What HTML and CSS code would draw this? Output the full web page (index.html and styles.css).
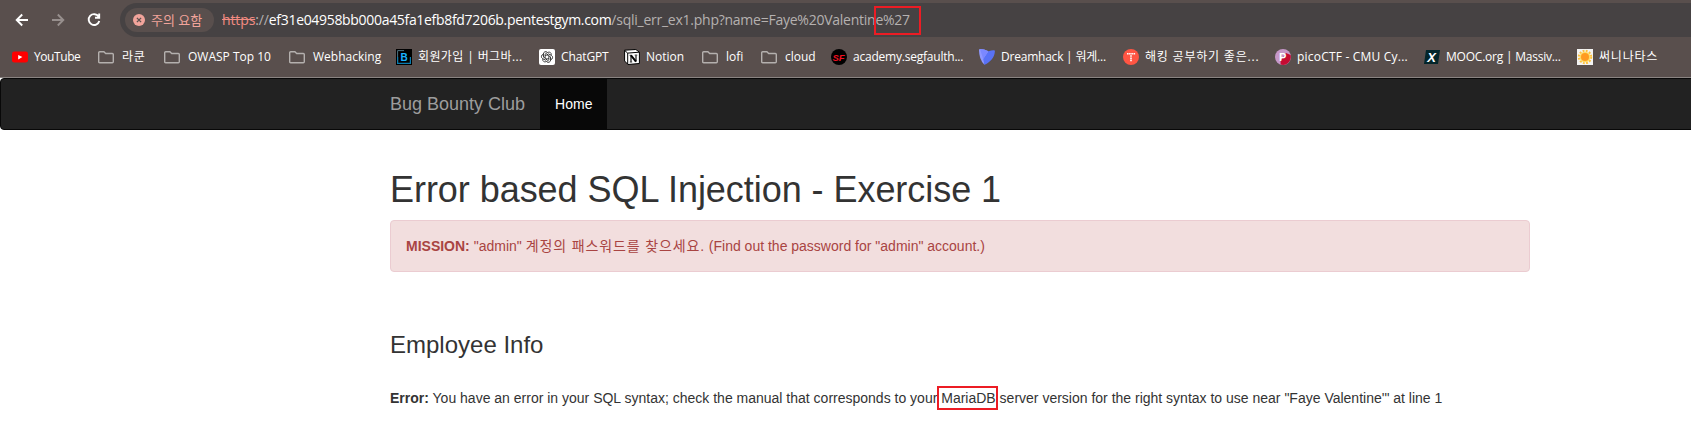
FILE: index.html
```html
<!DOCTYPE html>
<html lang="ko">
<head>
<meta charset="utf-8">
<title>Bug Bounty Club</title>
<link rel="stylesheet" href="styles.css">
</head>
<body>
<div class="browser">
  <div class="toolbar">
    <svg class="nav-icon" viewBox="0 0 16 16"><path d="M14 8H3M8.2 2.5L2.7 8l5.5 5.5"/></svg>
    <svg class="nav-icon dim" viewBox="0 0 16 16"><path d="M2 8h11M7.8 2.5L13.3 8l-5.5 5.5"/></svg>
    <svg class="nav-icon" viewBox="0 0 16 16"><path d="M12.6 4.6A5.4 5.4 0 1 0 13.3 9M13.2 1.6v4.2H9"/></svg>
    <div class="address">
      <div class="chip">
        <svg class="chip-icon" viewBox="0 0 12 12"><circle cx="6" cy="6" r="6" fill="#f2a49b"/><path d="M3.9 3.9l4.2 4.2M8.1 3.9L3.9 8.1" stroke="#594f4d" stroke-width="1.3"/></svg>
        <span>주의 요함</span>
      </div>
      <div class="url"><span class="scheme"><s>https</s><span class="slashes">://</span></span><span class="host">ef31e04958bb000a45fa1efb8fd7206b.pentestgym.com</span><span class="path">/sqli_err_ex1.php?name=Faye%20Valentin<span class="marked">e%27<span class="mark"></span></span></span></div>
    </div>
  </div>
  <div class="bookmarks">
    <div class="bm tight-3"><svg viewBox="0 0 16 16"><rect y="2.6" width="16" height="11" rx="2.4" fill="#f00"/><path d="M6.2 5.9v4.5L10.4 8.1z" fill="#fff"/></svg><span>YouTube</span></div>
    <div class="bm folder wide-3"><svg viewBox="0 0 16 16"><use href="#folder"/></svg><span>라쿤</span></div>
    <div class="bm folder"><svg viewBox="0 0 16 16"><use href="#folder"/></svg><span>OWASP Top 10</span></div>
    <div class="bm folder"><svg viewBox="0 0 16 16"><use href="#folder"/></svg><span>Webhacking</span></div>
    <div class="bm wide-2"><svg viewBox="0 0 16 16"><rect width="16" height="16" fill="#000"/><path d="M1.6 14.5V1.6H8" fill="none" stroke="#4d7382"/><path d="M1.6 8v6.4h12.8V8" fill="none" stroke="#087caf" stroke-width="1.2"/><text x="4.4" y="12" class="glyph-b">B</text></svg><span>회원가입 | 버그바...</span></div>
    <div class="bm tight-1"><svg viewBox="0 0 16 16"><rect width="16" height="16" rx="2" fill="#fff"/><g fill="none" stroke="#222" stroke-width=".8"><path id="petal" d="M6.1 9.1V5.1L8.8 3.4a2.3 2.3 0 0 1 3.4 2.6"/><use href="#petal" transform="rotate(60 8 8)"/><use href="#petal" transform="rotate(120 8 8)"/><use href="#petal" transform="rotate(180 8 8)"/><use href="#petal" transform="rotate(240 8 8)"/><use href="#petal" transform="rotate(300 8 8)"/></g></svg><span>ChatGPT</span></div>
    <div class="bm"><svg viewBox="0 0 16 16"><path d="M.6 1.2L11.8.5l3.6 2.6v11.4l-11.4 1L.6 12z" fill="#fff" stroke="#000"/><path d="M.8 1.6L3.7 4.1l11.6-.9M3.7 4.1v11.2" fill="none" stroke="#000"/><path d="M7 6.6v6.2M12 6.4v6.2" fill="none" stroke="#000" stroke-width="1.1"/><path d="M7 6.4l5 6.2" stroke="#000" stroke-width="2"/><path d="M5.6 6.3h2M5.8 13h2.4M10.7 6.1h2.6" stroke="#000" stroke-width=".8"/></svg><span>Notion</span></div>
    <div class="bm folder"><svg viewBox="0 0 16 16"><use href="#folder"/></svg><span>lofi</span></div>
    <div class="bm folder"><svg viewBox="0 0 16 16"><use href="#folder"/></svg><span>cloud</span></div>
    <div class="bm tight-2"><svg viewBox="0 0 16 16"><circle cx="8" cy="8" r="8" fill="#000"/><text x="1.5" y="11.6" class="glyph-sf">SF</text></svg><span>academy.segfaulth...</span></div>
    <div class="bm tight-2"><svg viewBox="0 0 16 16"><path d="M0 1Q0 0 1 0Q5 0 9.4 2.2L5.4 15.8Q0 10.5 0 1z" fill="#8f98ff"/><path d="M9.4 2.2Q13 1 15 1.2 16 1.3 15.9 2.2C15.6 9 10.5 13.5 5.4 15.8L4.2 10z" fill="#5972f5"/><path d="M1 0Q5 0 9.4 2.2L4.2 10z" fill="#7b88ff"/></svg><span>Dreamhack | 워게...</span></div>
    <div class="bm wide-3"><svg viewBox="0 0 16 16"><circle cx="8" cy="8" r="8" fill="#ff5543"/><g fill="#fff"><path d="M4 4h1.6v1.6H4zM6.1 4h1.6v1.6H6.1zM8.3 4h1.6v1.6H8.3zM10.5 4h1.6v1.6h-1.6zM7.2 6.2h1.6v1.6H7.2zM7.2 8.4h1.6V10H7.2zM7.2 10.6h1.6v1.6H7.2z"/></g></svg><span>해킹 공부하기 좋은...</span></div>
    <div class="bm wide-1"><svg viewBox="0 0 16 16"><circle cx="8" cy="8" r="8" fill="#c697c8"/><path d="M5.6 15.6A8 8 0 0 0 15.6 6L11 4 5.5 12z" fill="#c50b32"/><text x="4" y="12" class="glyph-p">P</text></svg><span>picoCTF - CMU Cy...</span></div>
    <div class="bm tight-2"><svg viewBox="0 0 16 16"><path d="M2 1h14l-2 14H0z" fill="#03262b"/><text x="3.2" y="12.8" class="glyph-x">X</text></svg><span>MOOC.org | Massiv...</span></div>
    <div class="bm wide-3"><svg viewBox="0 0 16 16"><rect width="16" height="16" fill="#f3f3f3"/><circle cx="8" cy="8" r="6.2" fill="none" stroke="#ffc23c" stroke-width="2" stroke-dasharray="1.9 1.35"/><circle cx="8" cy="8" r="5.3" fill="#ffdc61"/><circle cx="8" cy="8" r="4" fill="#ff9b22"/></svg><span>써니나타스</span></div>
  </div>
</div>
<svg class="defs"><defs><path id="folder" d="M1.7 2.7h4.2l1.8 1.8h6.6q1 0 1 1v7.2q0 1-1 1H1.7q-1 0-1-1v-9q0-1 1-1z" fill="none" stroke="#b4b0ae" stroke-width="1.4"/></defs></svg>
<div class="viewport">
  <div class="page">
    <nav class="navbar">
      <div class="container nav-inner">
        <a class="brand">Bug Bounty Club</a>
        <a class="home">Home</a>
      </div>
    </nav>
    <main class="container">
      <h1>Error based SQL Injection - Exercise 1</h1>
      <div class="alert"><strong>MISSION:</strong> "admin" <span class="ko">계정의 패스워드를 찾으세요.</span> (Find out the password for "admin" account.)</div>
      <h3>Employee Info</h3>
      <p class="error"><strong>Error:</strong> You have an error in your SQL syntax; check the manual that corresponds to your <span class="marked db">MariaDB<span class="mark"></span></span> server version for the right syntax to use near "Faye Valentine'" at line 1</p>
    </main>
  </div>
</div>
</body>
</html>
```
FILE: styles.css
```css
* { box-sizing: border-box; }
body { margin: 0; background: #fff; color: #333; font: 14px/20px "Liberation Sans", "Noto Sans CJK KR", sans-serif; }
.defs { display: none; }
.browser { height: 78px; background: #594f4d; border-bottom: 1px solid #8a8482; font-family: "Open Sans", "Noto Sans CJK KR", sans-serif; }
.toolbar { display: flex; align-items: center; height: 40px; padding-left: 14px; }
.nav-icon { width: 16px; height: 16px; margin-right: 20px; fill: none; stroke: #fff; stroke-width: 1.9; }
.nav-icon.dim { stroke: #978f8d; }
.address { display: flex; align-items: center; flex: 1; height: 34px; margin-left: -2px; padding-left: 5px; border-radius: 17px 0 0 17px; background: #464243; }
.chip { display: flex; align-items: center; width: 89px; height: 24px; padding-left: 8px; border-radius: 12px; background: #594f4d; color: #f2a49b; font-size: 13px; white-space: nowrap; }
.chip-icon { width: 12px; height: 12px; margin-right: 6px; }
.url { display: flex; margin-left: 8px; font-size: 14px; white-space: pre; color: #b5b1b0; }
.scheme { color: #f28b82; letter-spacing: -.12px; }
.slashes { color: #b5b1b0; }
.host { color: #fff; letter-spacing: -.317px; }
.path { letter-spacing: -.25px; }
.marked { position: relative; }
.mark { position: absolute; border: 2px solid #ec1c24; left: -1px; top: -4px; width: 47px; height: 29px; }
.db .mark { left: -4px; top: -4px; width: 61px; height: 24px; }
.bookmarks { display: grid; grid-template-columns: 86px 66px 125px 107px 143px 85px 78px 59px 70px 148px 144px 152px 149px 153px 90px; padding-left: 12px; height: 34px; align-items: center; color: #fff; font-size: 12px; white-space: nowrap; }
.bm { display: flex; align-items: center; gap: 6px; }
.bm.folder { gap: 8px; }
.bm svg { width: 16px; height: 16px; flex: none; letter-spacing: 0; }
.tight-1 { letter-spacing: -.12px; }
.tight-2 { letter-spacing: -.22px; }
.tight-3 { letter-spacing: -.42px; }
.wide-1 { letter-spacing: .2px; }
.wide-2 { letter-spacing: .38px; }
.wide-3 { letter-spacing: .8px; }
.glyph-b { font: bold 10px "Liberation Sans", sans-serif; fill: #1ab3ff; }
.glyph-sf { font: italic bold 9.5px "Liberation Sans", sans-serif; fill: #f01020; }
.glyph-p { font: bold 11px "Liberation Sans", sans-serif; fill: #fff; }
.glyph-x { font: italic bold 13px "Liberation Sans", sans-serif; fill: #fff; }
.viewport { overflow: hidden; height: 368px; }
.page { width: 1920px; }
.container { width: 1170px; margin: 0 auto; padding: 0 15px; }
.navbar { height: 52px; margin-bottom: 40px; border: 1px solid #080808; border-radius: 4px; background: #222; }
.nav-inner { display: flex; }
.brand { padding: 15px 15px 15px 0; font-size: 18px; color: #9d9d9d; }
.home { padding: 15px; background: #080808; color: #fff; }
h1, h3 { font-weight: normal; line-height: 1.1; margin: 0 0 10px; }
h1 { font-size: 36px; letter-spacing: -.05px; }
h3 { font-size: 24px; margin-top: 60px; }
.alert { height: 52px; padding: 15px; border: 1px solid #ebccd1; border-radius: 4px; background: #f2dede; color: #a94442; }
.ko { letter-spacing: .87px; }
.error { margin: 30px 0 0; }
```
